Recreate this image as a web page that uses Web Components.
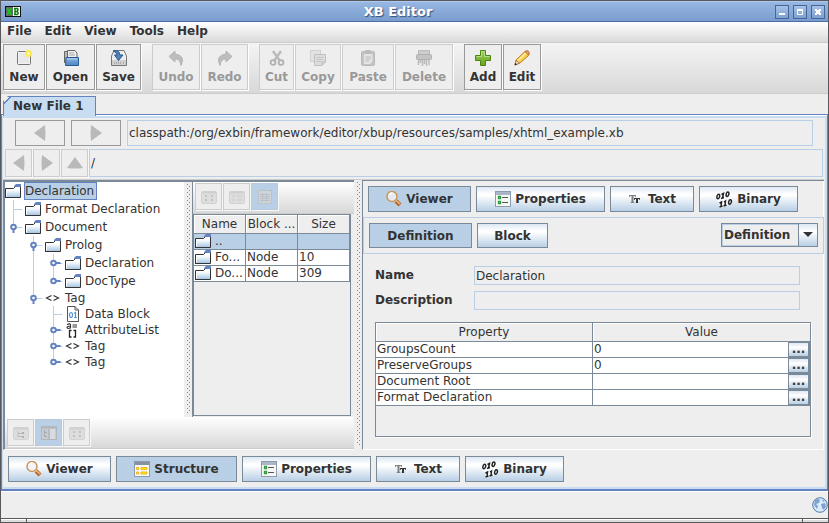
<!DOCTYPE html>
<html lang="en">
<head>
<meta charset="utf-8">
<title>XB Editor</title>
<style>
html, body { margin: 0; height: 100%; }
body { font: 12px/16px "DejaVu Sans", sans-serif; color: #333; background: #eee; overflow: hidden; }
</style>
</head>
<body>
<xb-app></xb-app>
<script>
const define = (name, html, setup) => {
  const tpl = document.createElement('template');
  tpl.innerHTML = '<style>*{box-sizing:border-box}:host{box-sizing:border-box}button,input,select{font:inherit;color:inherit;margin:0}</style>' + html;
  customElements.define(name, class extends HTMLElement {
    constructor() { super(); this.attachShadow({ mode: 'open' }).append(tpl.content.cloneNode(true)); }
    connectedCallback() { if (setup && !this.ready) { this.ready = true; setup(this, this.shadowRoot); } }
  });
};

const folder = `<path d="M.5 13.500V4.500H8.500L10.500 2.500H15.500V13.500Z" fill="url(#fo)"/><path d="M1.500 12.500V5.500H9L10.500 4" fill="none" stroke="#fff"/><path d="M.5 13.500V4.500H8.500L10.500 2.500M15.500 3V13.500H0" fill="none" stroke="#333"/><path d="M11 0H16V3H9V2Z" fill="#6382bf"/>`;
const win = `<rect x=".5" y=".5" width="15" height="15" fill="#f7f8f6" stroke="#8b9cad"/><rect x="1" y="1" width="14" height="3" fill="#aab6c8"/>`;
const gray = `<rect x=".5" y="2.500" width="15" height="12" rx="1" fill="#ddd" stroke="#d2d2d2"/><path d="M1 3.500H15" stroke="#d0d0d0" stroke-width="2"/>`;
const icons = {
  app: [16, 11, `<rect width="16" height="11" fill="#111"/><rect x="1" y="1" width="7" height="9" fill="#666"/><rect x="8" y="1" width="7" height="9" fill="#fff"/><path d="M2 2L6.500 9M6.500 2L2 9" stroke="#18c818" stroke-width="1.500"/><path d="M10 2V9M9 2.500H12.500L13 4L12 5.500H10M12 5.500L13.200 7L12.500 8.500H9" fill="none" stroke="#0b7c0b" stroke-width="1.500"/>`],
  min: [14, 14, `<rect x=".5" y=".5" width="13" height="13" fill="url(#wb)" stroke="#446798"/><rect x="4" y="8" width="6" height="2" fill="#fff"/>`],
  max: [14, 14, `<rect x=".5" y=".5" width="13" height="13" fill="url(#wb)" stroke="#446798"/><path d="M4.500 4V9.500H9.500V4" fill="none" stroke="#fff"/><path d="M4 5H10" stroke="#fff" stroke-width="2"/>`],
  close: [14, 14, `<rect x=".5" y=".5" width="13" height="13" fill="url(#wb)" stroke="#446798"/><path d="M4 4h2v1h2V4h2v2H9v2h1v2H8V9H6v1H4V8h1V6H4Z" fill="#fff"/>`],
  new: [16, 16, `<rect x="1.500" y="1.500" width="13" height="13" rx="1" fill="#f2f2f2" stroke="#777"/><rect x="3" y="3" width="10" height="10" fill="#e8e8e8"/><circle cx="12.500" cy="3.500" r="3.500" fill="#fff13c" opacity=".9"/><circle cx="12.500" cy="3.500" r="1.400" fill="#fffbd0"/>`],
  open: [16, 16, `<path d="M1.500 13V1.500H4.500V13" fill="#bbb" stroke="#666"/><path d="M4.500 11V.5H12L14 3V11Z" fill="#eee" stroke="#666"/><path d="M6 3H11M6 5H12" stroke="#aaa"/><path d="M2.500 15.500L3 7.500H15.500V15.500Z" fill="url(#bl)" stroke="#2a5a94"/><path d="M4 9H14.500" stroke="#b8d3ef"/>`],
  save: [16, 16, `<path d="M.5 15.500V6L3 .5H13L15.500 6V15.500Z" fill="#eee" stroke="#777"/><rect x="1" y="10" width="14" height="5" fill="#d0d0d0"/><path d="M3 13H10M12 13H13" stroke="#888" stroke-dasharray="1 1"/><path d="M2 1Q8-1 9 5H12L7.500 10.500 3.500 5H6Q6 2 2 1Z" fill="#4f83b8" stroke="#29598d"/>`],
  undo: [16, 16, `<path d="M7 1L1 6.500 7 12V9Q12 8 13 15.500 18 5.500 7 4Z" fill="#bdbdbd" stroke="#b4b4b4"/>`],
  redo: [16, 16, `<path d="M9 1L15 6.500 9 12V9Q4 8 3 15.500-2 5.500 9 4Z" fill="#bdbdbd" stroke="#b4b4b4"/>`],
  cut: [16, 16, `<path d="M4 1L11 11M12 1L5 11" stroke="#bbb" stroke-width="2.500"/><circle cx="4" cy="12.500" r="2.400" fill="none" stroke="#b0b0b0" stroke-width="1.800"/><circle cx="12" cy="12.500" r="2.400" fill="none" stroke="#b0b0b0" stroke-width="1.800"/>`],
  copy: [16, 16, `<rect x=".5" y=".5" width="10" height="11" fill="#e2e2e2" stroke="#d0d0d0"/><path d="M4.500 4.500H15.500V12L12 15.500H4.500Z" fill="#ddd" stroke="#bfbfbf"/><path d="M6.500 7.500H13M6.500 9.500H13M6.500 11.500H11" stroke="#c6c6c6"/><path d="M12 15V12H15" fill="none" stroke="#bbb"/>`],
  paste: [16, 16, `<rect x="1.500" y="1.500" width="13" height="14" rx="1" fill="#c4c4c4" stroke="#b9b9b9"/><path d="M4 4H12.500V11L10 14H4Z" fill="#e4e4e4"/><rect x="5" y="0" width="6" height="4" rx="1" fill="#bbb"/><path d="M5.500 7H11M5.500 9H11M5.500 11H9" stroke="#bbb"/>`],
  delete: [16, 16, `<rect x="2.500" y=".5" width="11" height="5" fill="#ccc" stroke="#bcbcbc"/><rect x=".5" y="4.500" width="15" height="5" rx="1" fill="#c4c4c4" stroke="#b0b0b0"/><path d="M2.500 10V15M4.500 10V13M6.500 10V16M8.500 10V14M10.500 10V16M13 10V15" stroke="#bbb" stroke-width="1.500"/>`],
  add: [16, 16, `<path d="M5.500.5H10.500V5.500H15.500V10.500H10.500V15.500H5.500V10.500H.5V5.500H5.500Z" fill="url(#gr)" stroke="#4e8410"/><path d="M6.500 6.500V1.500H9.500V6.500M1.500 6.500H6.500M9.500 6.500H14.500" fill="none" stroke="#b8de8b"/>`],
  edit: [16, 16, `<path d="M1 15L2 10 11 1.500Q14 0 15 3 15 5 14 6L6 13Z" fill="#f6cf4d" stroke="#c07d20"/><path d="M4 10.500L12 3" stroke="#fff1a4" stroke-width="1.500"/><path d="M11 1.500L14.500 5Q16 1 13 .8Z" fill="#eaa578" stroke="#b36b43"/><path d="M1 15L2 10.500 5.500 13Z" fill="#f4dfc2" stroke="#a56b32" stroke-width=".7"/><path d="M.7 15.300L1.300 13 3 14.500Z" fill="#222"/>`],
  left: [12, 16, `<path d="M0 8L11 0Q12 8 11 16Z" fill="#b9b9b9"/>`],
  right: [12, 16, `<path d="M12 8L1 0Q0 8 1 16Z" fill="#b9b9b9"/>`],
  up: [16, 12, `<path d="M8 0L16 11Q8 12 0 11Z" fill="#b9b9b9"/>`],
  folder: [16, 14, folder],
  tag: [16, 16, `<path d="M6.500 5.500L1.500 8 6.500 10.500M8.500 5.500L13.500 8 8.500 10.500" fill="none" stroke="#333" stroke-width="1.200"/>`],
  data: [16, 16, `<path d="M2.500.5H10L13.500 4V15.500H2.500Z" fill="#fff" stroke="#555"/><path d="M10 .5V4H13.500" fill="none" stroke="#555"/><ellipse cx="6" cy="9" rx="1.500" ry="2.500" fill="none" stroke="#5594d2" stroke-width="1.200"/><path d="M9 7.500L10.500 6.500V12M9 11.500H12" fill="none" stroke="#5594d2" stroke-width="1.200"/>`],
  attr: [16, 16, `<path d="M2 2.500Q5.500 1 5.500 3V6.500M5.500 4.300Q2 4 2 5.500 3 7.500 5.500 5.500M7.500 3H12M7.500 5H12" fill="none" stroke="#333" stroke-width="1.100"/><path d="M6.500 8.500H4.500V15H6.500M8.500 8.500H10.500V15H8.500" fill="none" stroke="#222" stroke-width="1.300"/>`],
  viewer: [16, 16, `<circle cx="6" cy="5.500" r="5" fill="#f1f3f5" fill-opacity=".8" stroke="#cd965b" stroke-width="1.500"/><path d="M3 4Q4 2 6.500 2" fill="none" stroke="#fff" stroke-width="1.500"/><path d="M10 10L14 14" stroke="#b5682c" stroke-width="4"/><path d="M10 9.500L14 13" stroke="#f0bd78" stroke-width="1.500"/>`],
  props: [16, 16, win + `<path d="M3.500 5.500H5.500V7.500H3.500ZM3.500 10.500H5.500V12.500H3.500Z" fill="#cbe9cb" stroke="#2f9a42" stroke-width="1.300"/><path d="M7 6.500H13M7 11.500H13" stroke="#555" stroke-width="1.200"/>`],
  struct: [16, 16, win + `<rect x="1" y="1" width="14" height="3" fill="#8590a3"/><path d="M2.500 6.500H4.500V8.500H2.500ZM2.500 11H4.500V13H2.500ZM7 6.500H13V8.500H7ZM7 11H13V13H7Z" fill="#ffed00" stroke="#efb820"/>`],
  text: [16, 16, `<path d="M1 4H8V6H7.500L6.500 5H5.500V11L6.500 11.500V12H2.500V11.500L3.500 11V5H2.500L1.500 6H1Z" fill="#808080"/><path d="M6 7H12V9H11.500L11 8H10V11.500L10.500 12H7.500L8 11.500V8H7L6.500 9H6Z" fill="#333"/>`],
  binary: [17, 17, `<path d="M0 3L13 0 14 6 16 7 16 13 4 17 3 11 1 10Z" fill="#fff" opacity=".8"/><g fill="none" stroke="#222" stroke-width="1.500"><ellipse cx="2.300" cy="5.500" rx="1.300" ry="2.300" transform="rotate(15 2.300 5.500)"/><path d="M5.500 3.500L7.500 2.500 6.500 7M5 7.500L8 6.500"/><ellipse cx="11.500" cy="3.200" rx="1.300" ry="2.300" transform="rotate(15 11.500 3.200)"/><path d="M3.500 12L5.500 11 5 15.500M3.500 16L6.500 15M8 11L9.500 10 9 14.500M7.500 15L10.500 14"/><ellipse cx="14" cy="11" rx="1.300" ry="2.300" transform="rotate(15 14 11)"/></g>`],
  gtree: [16, 16, gray + `<path d="M5 6V12M5 8.500H9M5 11.500H9" fill="none" stroke="#bbb"/><path d="M9 7h2v2H9zM9 11h2v2H9z" fill="#b0b0b0"/>`],
  gsplit: [16, 16, `<rect x=".5" y="1.500" width="15" height="13" fill="#c8ccd0" stroke="#b3b7bb"/><path d="M1 2.500H15" stroke="#b3b7bb" stroke-width="2"/><rect x="9" y="4" width="5" height="10" fill="#d8dce0"/><path d="M3.500 5V12M3.500 7.500H6M3.500 11.500H6M8 4V14" stroke="#a6aaae"/>`],
  gicons: [16, 16, gray + `<path d="M4 6h2v2H4zM10 6h2v2h-2zM4 10h2v2H4zM10 10h2v2h-2z" fill="#c2c2c2"/>`],
  glist: [16, 16, gray + `<path d="M3 7H6M8 7H13M3 11H6M8 11H13" stroke="#ccc"/>`],
  gtable: [16, 16, `<rect x="1.500" y="1.500" width="13" height="13" fill="#cfd4d9" stroke="#bcc2c8"/><path d="M3 5.500H13M3 7.500H13M3 9.500H13M3 11.500H13M5.500 4V13M9.500 4V13" stroke="#b9c0c7"/>`],
  arrow: [10, 6, `<path d="M0 0H10L5 5Z" fill="#333"/>`],
  globe: [16, 16, `<circle cx="8" cy="8" r="7.300" fill="#dceafa" stroke="#4f79ab"/><path d="M3 3Q6 1 8 3L7 6 4 7 6 9 5 12 2 8ZM9 7L13 6 14 9 12 13 10 11ZM10 2L13 4 11 5Z" fill="#7fa3cd"/>`]
};
const defs = `<defs><linearGradient id="fo" x2="0" y2="1"><stop offset=".3" stop-color="#fff"/><stop offset="1" stop-color="#a3c4e2"/></linearGradient><linearGradient id="wb" x2="0" y2="1"><stop stop-color="#a9c3e8"/><stop offset="1" stop-color="#7a9fd0"/></linearGradient><linearGradient id="bl" x2="0" y2="1"><stop stop-color="#8ab4e0"/><stop offset="1" stop-color="#4b86c4"/></linearGradient><linearGradient id="gr" x2="0" y2="1"><stop stop-color="#9ccc62"/><stop offset="1" stop-color="#67a61c"/></linearGradient></defs>`;
define('xb-icon', `<style>:host{display:inline-block;flex:none;line-height:0}</style>`, (el, root) => {
  const [w, h, body] = icons[el.getAttribute('name')];
  root.innerHTML += `<svg width="${w}" height="${h}" viewBox="0 0 ${w} ${h}" aria-hidden="true">${defs}${body}</svg>`;
});

/* push button with the blue-grey gradient */
define('xb-button', `<style>
:host{display:block;flex:none;height:26px}
button{width:100%;height:100%;padding:0;display:flex;align-items:center;justify-content:center;gap:4px;font-weight:bold;border:1px solid #7a8a99;background:linear-gradient(#dde8f3,#fff 30%,#fff 35%,#b8cfe5)}
:host([pressed]) button{background:#b8cfe5}
:host([nav]) button{background:#eee;border-color:#999}
</style><button type="button"><slot name="icon"></slot><slot></slot></button>`, (el, root) => {
  const b = root.querySelector('button');
  if (el.hasAttribute('label')) b.setAttribute('aria-label', el.getAttribute('label'));
  if (el.hasAttribute('pressed')) b.setAttribute('aria-pressed', 'true');
});

/* icon-over-text button of the main toolbar */
define('xb-tool', `<style>
:host{display:block;flex:none;height:46px;box-shadow:1px 1px #fff}
button{width:100%;height:100%;padding:5px 0 0;display:flex;flex-direction:column;align-items:center;justify-content:flex-start;gap:3px;font-weight:bold;border:1px solid #999;background:#eee}
:host([off]) button{border-color:#ccc;color:#999}
</style><button type="button"><slot></slot></button>`, (el, root) => {
  const b = root.querySelector('button'), icon = document.createElement('xb-icon');
  b.disabled = el.hasAttribute('off');
  icon.setAttribute('name', el.getAttribute('icon'));
  b.prepend(icon);
});

/* small square icon button */
define('xb-mini', `<style>
:host{display:block;flex:none;width:27px;height:27px;box-shadow:1px 1px #f8f8f8}
button{width:100%;height:100%;padding:0;display:grid;place-items:center;border:1px solid #ccc;background:#eee}
:host([pressed]) button{background:#b8cfe5;border-color:#b8cade}
</style><button type="button"><slot></slot></button>`, (el, root) => root.querySelector('button').setAttribute('aria-label', el.getAttribute('label')));

define('xb-field', `<style>
:host{display:block;min-width:0;height:19px}
input{display:block;width:100%;height:100%;border:1px solid #b8cfe5;background:#eee;padding:0 1px;border-radius:0;outline:0}
</style><input type="text" readonly>`, (el, root) => {
  const i = root.querySelector('input');
  i.value = el.getAttribute('value') || ''; i.setAttribute('aria-label', el.getAttribute('label'));
});

define('xb-splitter', `<style>
:host{display:block;flex:none;width:8px;padding:2px 2px 4px 3px;
background:conic-gradient(from 270deg at 1px 1px,#7a8a99 90deg,transparent 0) 0 0/4px 4px content-box,conic-gradient(from 270deg at 1px 1px,#7a8a99 90deg,transparent 0) 2px 2px/4px 4px content-box,#eee}
</style>`);

/* tree row: "guides" marks which ancestor columns carry a line */
define('xb-node', `<style>
:host{display:flex;align-items:center;height:16px;white-space:nowrap}
:host([tall]){height:18px}
.guide{flex:none;display:block}
span{height:16px;padding:0 1px;margin-left:3px}
:host([selected]) span{height:18px;line-height:16px;background:#b8cfe5;border:1px solid #6382bf;padding:0 2px 0 0}
</style><svg class="guide"></svg><span><slot></slot></span>`, (el, root) => {
  const depth = +el.getAttribute('depth'), h = el.hasAttribute('tall') ? 18 : 16, m = h / 2, handle = el.getAttribute('handle');
  const guides = el.getAttribute('guides') || '';
  let s = '';
  for (let i = 0; i < depth - 1; i++) if (guides[i] === '1') s += `<path d="M${i * 20 + 8.5} 0V${h}"/>`;
  if (depth) {
    const x = (depth - 1) * 20 + 8.5;
    s += `<path d="M${x} 0V${el.hasAttribute('last') ? m : h}M${x} ${m + .5}H${x + 9}"/>`;
    if (handle) s += `<g stroke="#6382bf" stroke-width="2"><path d="M${x} ${m}${handle === 'open' ? 'v6' : 'h7'}"/><circle cx="${x}" cy="${m}" r="2.300" fill="#fff"/></g>`;
  }
  const svg = root.querySelector('svg');
  svg.setAttribute('width', depth * 20); svg.setAttribute('height', h);
  svg.innerHTML = `<g stroke="#b8cfe5" fill="none">${s}</g>`;
  const ic = document.createElement('xb-icon');
  ic.setAttribute('name', el.getAttribute('icon')); svg.after(ic);
});

define('xb-files', `<style>
:host{display:block;flex:1;border:1px solid #7a8a99;margin:0 3px 1px 0;min-height:0}
table{width:100%;border-spacing:0;table-layout:fixed}
th,td{padding:0;font-weight:normal;border:solid #7a8a99;border-width:0 1px 1px 0;white-space:nowrap;overflow:hidden;height:16px;line-height:15px;background:#fff}
th{height:19px;line-height:18px;background:#eee;box-shadow:inset 1px 1px #fff}
td{padding-left:1px}
div{display:flex;gap:4px;height:15px}
.sel td{background:#b8cfe5}
</style><table><thead><tr><th>Name</th><th>Block ...</th><th>Size</th></tr></thead><tbody>
<tr class="sel"><td><div><xb-icon name="folder"></xb-icon>..</div></td><td></td><td></td></tr>
<tr><td><div><xb-icon name="folder"></xb-icon>Fo...</div></td><td>Node</td><td>10</td></tr>
<tr><td><div><xb-icon name="folder"></xb-icon>Do...</div></td><td>Node</td><td>309</td></tr></tbody></table>`);

define('xb-properties', `<style>
:host{display:block;border:1px solid #7a8a99;box-shadow:1px 1px #fff;min-height:0}
table{width:100%;border-spacing:0;table-layout:fixed}
th,td{padding:0;font-weight:normal;text-align:left;border-bottom:1px solid #7a8a99;height:16px;line-height:15px;background:#fff}
th{height:19px;line-height:18px;text-align:center;background:#eee;box-shadow:inset 1px 1px #fff}
tr>:first-child{border-right:1px solid #7a8a99}
td{padding-left:1px}
div{display:flex;justify-content:space-between}
button{width:22px;height:15px;padding:0;line-height:13px;font-weight:bold;border:1px solid #7a8a99;border-right-width:2px;background:linear-gradient(#dde8f3,#fff 35%,#b8cfe5)}
</style><table><thead><tr><th>Property</th><th>Value</th></tr></thead><tbody></tbody></table>`, (el, root) => {
  const body = root.querySelector('tbody');
  for (const [k, v] of [['GroupsCount', '0'], ['PreserveGroups', '0'], ['Document Root', ''], ['Format Declaration', '']])
    body.insertAdjacentHTML('beforeend', `<tr><td>${k}</td><td><div><span>${v}</span><button type="button" aria-label="Edit ${k}">...</button></div></td></tr>`);
});

define('xb-combo', `<style>
:host{display:grid;width:97px;height:24px}
select,.arrow{grid-area:1/1}
select{appearance:none;width:100%;height:100%;border:1px solid #7a8a99;border-radius:0;padding:0 0 0 2px;font-weight:bold;background:#eee;box-shadow:inset 0 0 0 1px #b8cfe5}
.arrow{justify-self:end;width:20px;display:grid;place-items:center;border:1px solid #7a8a99;background:linear-gradient(#dde8f3,#fff 35%,#b8cfe5);pointer-events:none}
</style><select aria-label="View"><option>Definition</option></select><span class="arrow"><xb-icon name="arrow"></xb-icon></span>`);

define('xb-titlebar', `<style>
:host{display:flex;align-items:center;height:21px;padding:0 3px 0 4px;border-top:1px solid #b0caee;border-bottom:1px solid #4a6fa8;background:linear-gradient(#98b7e2,#799dce)}
h1{flex:1;text-align:center;margin:0;font-size:13px;line-height:18px;color:#fff;text-shadow:1px 1px 1px #33507c}
div{display:flex;gap:4px}
button{border:0;padding:0;background:none;height:14px;display:block}
</style><xb-icon name="app"></xb-icon><h1>XB Editor</h1><div><button aria-label="Minimize"><xb-icon name="min"></xb-icon></button><button aria-label="Maximize"><xb-icon name="max"></xb-icon></button><button aria-label="Close"><xb-icon name="close"></xb-icon></button></div>`);

define('xb-menubar', `<style>
:host{display:flex;height:21px;border-bottom:1px solid #ccc;background:linear-gradient(#fff,#dadada)}
button{border:0;background:none;padding:0 7px 2px 6px;font-weight:bold}
</style><button>File</button><button>Edit</button><button>View</button><button>Tools</button><button>Help</button>`);

define('xb-app', `<style>
:host{display:flex;flex-direction:column;height:100vh;min-height:0;border:1px solid #58585c}
.main{display:flex;gap:1px;height:51px;padding:1px 0 0 2px;border-bottom:1px solid #ccc;background:linear-gradient(#f4f4f4,#d8d8d8)}
.main i{width:9px}
.tabs{height:20px;padding:2px 0 0 2px;display:flex}
.tabs button{height:20px;width:93px;padding:0 0 2px 9px;text-align:left;font-weight:bold;border:1px solid #6382bf;border-bottom:0;background:linear-gradient(135deg,#eee 4px,#6382bf 4px,#6382bf 5px,#c8ddf2 5px);clip-path:polygon(5px 0,100% 0,100% 100%,0 100%,0 5px);position:relative;z-index:1}
.page{flex:1;min-height:0;display:flex;flex-direction:column;border:1px solid #6382bf;border-bottom-width:2px;box-shadow:inset 0 1px #fff,inset 1px 0 #c8ddf2,inset -2px 0 #c8ddf2,inset 0 3px #c8ddf2,inset 0 -2px #c8ddf2;padding:5px 3px 7px 1px}
.row{display:flex}
.nav{gap:6px;padding:0 11px 0 12px}
.nav xb-button{width:50px}
.nav xb-field{flex:1;height:26px}
.path{gap:1px;padding:3px 1px 2px 2px;border-bottom:1px solid #ccc}
.path xb-field{flex:1;height:28px}
.path xb-mini{height:28px}
.split{flex:1;min-height:0;display:flex}
.west{flex:none;width:351px;display:flex;flex-direction:column;border-left:2px solid #7a8a99;border-top:2px solid #7a8a99;border-bottom:1px solid #fff}
.panes{flex:1;min-height:0;display:flex}
.tree{width:179px;background:#fff;overflow:hidden}
.list{flex:1;display:flex;flex-direction:column;border-left:1px solid #7a8a99;min-width:0}
.bar{display:flex;gap:1px;height:32px;padding:2px 2px 0;border-bottom:1px solid #ccc;background:linear-gradient(#fff,#d8d8d8)}
.list .bar{padding:1px 2px 0}
.east{flex:1;min-width:0;display:flex;flex-direction:column;border:solid #7a8a99;border-width:1px 0 0 1px;border-bottom:1px solid #fff;box-shadow:inset -1px 0 #fff}
.buttons{display:flex;gap:5px}
.east>.buttons{padding:5px}
.sub{display:flex;gap:5px;align-items:flex-start;height:37px;padding:5px;border:1px solid #b8cfe5}
.sub xb-button{height:25px}
.sub xb-combo{margin-left:auto}
.form{display:grid;grid-template-columns:99px 1fr;row-gap:6px;padding:12px 24px 12px 12px;font-weight:bold;line-height:19px}
.form xb-field{font-weight:normal;line-height:16px}
xb-properties{flex:1;margin:0 13px 12px 12px}
.foot{padding:6px 5px 0}
.status{height:27px;display:flex;justify-content:flex-end;align-items:center;border-top:1px solid #fff}
.grip{height:4px;display:flex;justify-content:space-between;padding:0 25px;border-top:1px solid #58585c;background:linear-gradient(#fff 1px,#ddd 1px)}
.grip i{width:1px;background:#58585c}
</style>
<xb-titlebar></xb-titlebar>
<xb-menubar></xb-menubar>
<div class="main">
<xb-tool icon="new" style="width:42px">New</xb-tool><xb-tool icon="open" style="width:49px">Open</xb-tool><xb-tool icon="save" style="width:45px">Save</xb-tool><i></i>
<xb-tool off icon="undo" style="width:48px">Undo</xb-tool><xb-tool off icon="redo" style="width:47px">Redo</xb-tool><i></i>
<xb-tool off icon="cut" style="width:35px">Cut</xb-tool><xb-tool off icon="copy" style="width:46px">Copy</xb-tool><xb-tool off icon="paste" style="width:52px">Paste</xb-tool><xb-tool off icon="delete" style="width:58px">Delete</xb-tool><i></i>
<xb-tool icon="add" style="width:38px">Add</xb-tool><xb-tool icon="edit" style="width:38px">Edit</xb-tool>
</div>
<div class="tabs"><button type="button">New File 1</button></div>
<div class="page">
<div class="row nav"><xb-button nav label="Back"><xb-icon slot="icon" name="left"></xb-icon></xb-button><xb-button nav label="Forward"><xb-icon slot="icon" name="right"></xb-icon></xb-button><xb-field label="Address" value="classpath:/org/exbin/framework/editor/xbup/resources/samples/xhtml_example.xb"></xb-field></div>
<div class="row path"><xb-mini label="Previous"><xb-icon name="left"></xb-icon></xb-mini><xb-mini label="Next"><xb-icon name="right"></xb-icon></xb-mini><xb-mini label="Up"><xb-icon name="up"></xb-icon></xb-mini><xb-field label="Path" value="/"></xb-field></div>
<div class="split">
<div class="west">
<div class="panes">
<div class="tree">
<xb-node tall selected depth="0" icon="folder">Declaration</xb-node>
<xb-node tall depth="1" icon="folder">Format Declaration</xb-node>
<xb-node tall depth="1" handle="open" last icon="folder">Document</xb-node>
<xb-node tall depth="2" handle="open" icon="folder">Prolog</xb-node>
<xb-node tall depth="3" handle="closed" guides="01" icon="folder">Declaration</xb-node>
<xb-node tall depth="3" handle="closed" guides="01" last icon="folder">DocType</xb-node>
<xb-node depth="2" handle="open" last icon="tag">Tag</xb-node>
<xb-node depth="3" icon="data">Data Block</xb-node>
<xb-node depth="3" handle="closed" icon="attr">AttributeList</xb-node>
<xb-node depth="3" handle="closed" icon="tag">Tag</xb-node>
<xb-node depth="3" handle="closed" last icon="tag">Tag</xb-node>
</div>
<xb-splitter></xb-splitter>
<div class="list">
<div class="bar"><xb-mini label="Icons"><xb-icon name="gicons"></xb-icon></xb-mini><xb-mini label="List"><xb-icon name="glist"></xb-icon></xb-mini><xb-mini pressed label="Table"><xb-icon name="gtable"></xb-icon></xb-mini></div>
<xb-files></xb-files>
</div>
</div>
<div class="bar"><xb-mini label="Tree only"><xb-icon name="gtree"></xb-icon></xb-mini><xb-mini pressed label="Tree and list"><xb-icon name="gsplit"></xb-icon></xb-mini><xb-mini label="List only"><xb-icon name="gicons"></xb-icon></xb-mini></div>
</div>
<xb-splitter></xb-splitter>
<div class="east">
<div class="buttons"><xb-button pressed style="width:103px"><xb-icon slot="icon" name="viewer"></xb-icon>Viewer</xb-button><xb-button style="width:129px"><xb-icon slot="icon" name="props"></xb-icon>Properties</xb-button><xb-button style="width:84px"><xb-icon slot="icon" name="text"></xb-icon>Text</xb-button><xb-button style="width:99px"><xb-icon slot="icon" name="binary"></xb-icon>Binary</xb-button></div>
<div class="sub"><xb-button pressed style="width:103px">Definition</xb-button><xb-button style="width:71px">Block</xb-button><xb-combo></xb-combo></div>
<div class="form"><span>Name</span><xb-field label="Name" value="Declaration"></xb-field><span>Description</span><xb-field label="Description"></xb-field></div>
<xb-properties></xb-properties>
</div>
</div>
<div class="buttons foot"><xb-button style="width:103px"><xb-icon slot="icon" name="viewer"></xb-icon>Viewer</xb-button><xb-button pressed style="width:121px"><xb-icon slot="icon" name="struct"></xb-icon>Structure</xb-button><xb-button style="width:129px"><xb-icon slot="icon" name="props"></xb-icon>Properties</xb-button><xb-button style="width:84px"><xb-icon slot="icon" name="text"></xb-icon>Text</xb-button><xb-button style="width:99px"><xb-icon slot="icon" name="binary"></xb-icon>Binary</xb-button></div>
</div>
<div class="status"><xb-icon name="globe"></xb-icon></div>
<div class="grip"><i></i><i></i></div>
`);
</script>
</body>
</html>
